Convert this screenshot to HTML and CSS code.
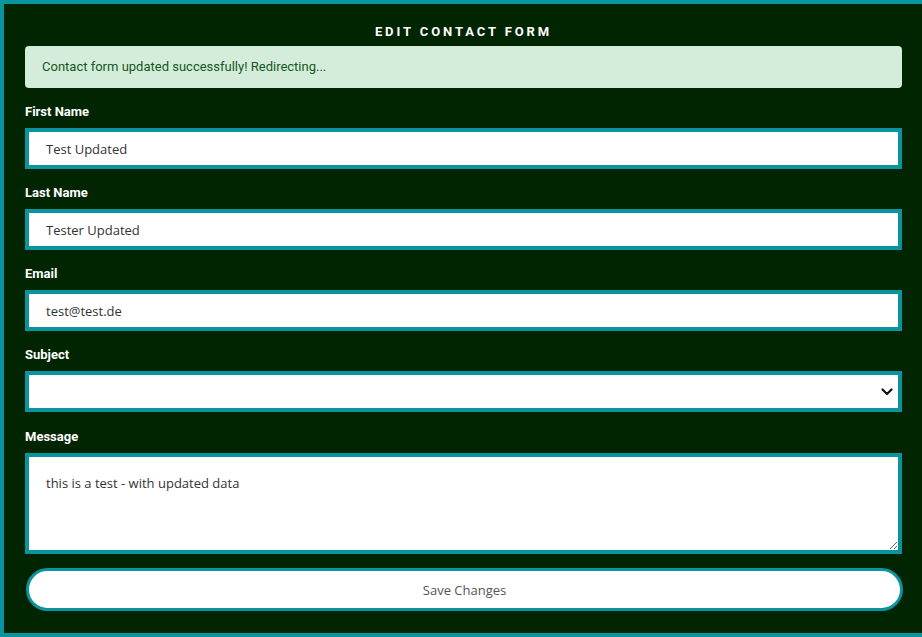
FILE: index.html
```html
<!DOCTYPE html>
<html lang="en">
<head>
<meta charset="utf-8">
<title>Edit Contact Form</title>
<link rel="stylesheet" href="styles.css">
</head>
<body>
<div class="card">
  <h1 class="title">EDIT CONTACT FORM</h1>
  <div class="alert">Contact form updated successfully! Redirecting...</div>
  <form class="form">
    <div class="group">
      <label class="label" for="fn">First Name</label>
      <input class="field" id="fn" type="text" value="Test Updated">
    </div>
    <div class="group">
      <label class="label" for="ln">Last Name</label>
      <input class="field" id="ln" type="text" value="Tester Updated">
    </div>
    <div class="group">
      <label class="label" for="em">Email</label>
      <input class="field" id="em" type="email" value="test@test.de">
    </div>
    <div class="group">
      <label class="label" for="sub">Subject</label>
      <div class="select-wrap">
        <select class="field select" id="sub"><option></option></select>
        <svg class="chev" width="12" height="8" viewBox="0 0 12 8" aria-hidden="true"><path d="M1.5 1.5 L6 6 L10.5 1.5" fill="none" stroke="#111" stroke-width="2.2" stroke-linecap="round" stroke-linejoin="round"/></svg>
      </div>
    </div>
    <div class="group group-msg">
      <label class="label" for="msg">Message</label>
      <textarea class="field area" id="msg">this is a test - with updated data</textarea>
    </div>
    <button class="save" type="button">Save Changes</button>
  </form>
</div>
</body>
</html>
```
FILE: styles.css
```css
html, body {
  margin: 0;
  padding: 0;
  overflow: hidden;
  background: #002500;
}
.card {
  box-sizing: border-box;
  width: 927px;
  height: 637px;
  border: 4px solid #0b939f;
  background: #002500;
  padding: 20px 21px 22px;
  font-family: Roboto, "Liberation Sans", sans-serif;
}
.title {
  margin: 0 0 6px;
  text-align: center;
  color: #ffffff;
  font-size: 13px;
  line-height: 16px;
  font-weight: 700;
  letter-spacing: 2.9px;
}
.alert {
  background: #d4edda;
  color: #155724;
  border-radius: 4px;
  padding: 12px 17px;
  font-size: 13px;
  line-height: 18px;
}
.form {
  display: flex;
  flex-direction: column;
}
.group {
  display: flex;
  flex-direction: column;
  margin-top: 15px;
}
.group-msg {
  margin-top: 16px;
}
.label {
  color: #ffffff;
  font-weight: 700;
  font-size: 13px;
  line-height: 17px;
  margin-bottom: 8px;
}
.field {
  box-sizing: border-box;
  width: 100%;
  height: 41px;
  border: 4px solid #0b939f;
  border-radius: 0;
  background: #ffffff;
  padding: 0 17px;
  margin: 0;
  font-family: "Open Sans", sans-serif;
  font-size: 13px;
  color: #333333;
  outline: none;
}
.select-wrap {
  position: relative;
}
.select {
  display: block;
  appearance: none;
  -webkit-appearance: none;
  padding: 0 30px 0 10px;
  color: #000;
}
.chev {
  position: absolute;
  right: 9px;
  top: 17px;
  pointer-events: none;
}
.area {
  height: 101px;
  padding: 17px 17px 10px;
  line-height: 18px;
  resize: vertical;
}
.save {
  box-sizing: border-box;
  margin-top: 14px;
  margin-left: 1px;
  width: 877px;
  height: 43px;
  border: 3px solid #0b939f;
  border-radius: 22px;
  background: #ffffff;
  font-family: "Open Sans", sans-serif;
  font-size: 13px;
  color: #555555;
  cursor: pointer;
}
```
